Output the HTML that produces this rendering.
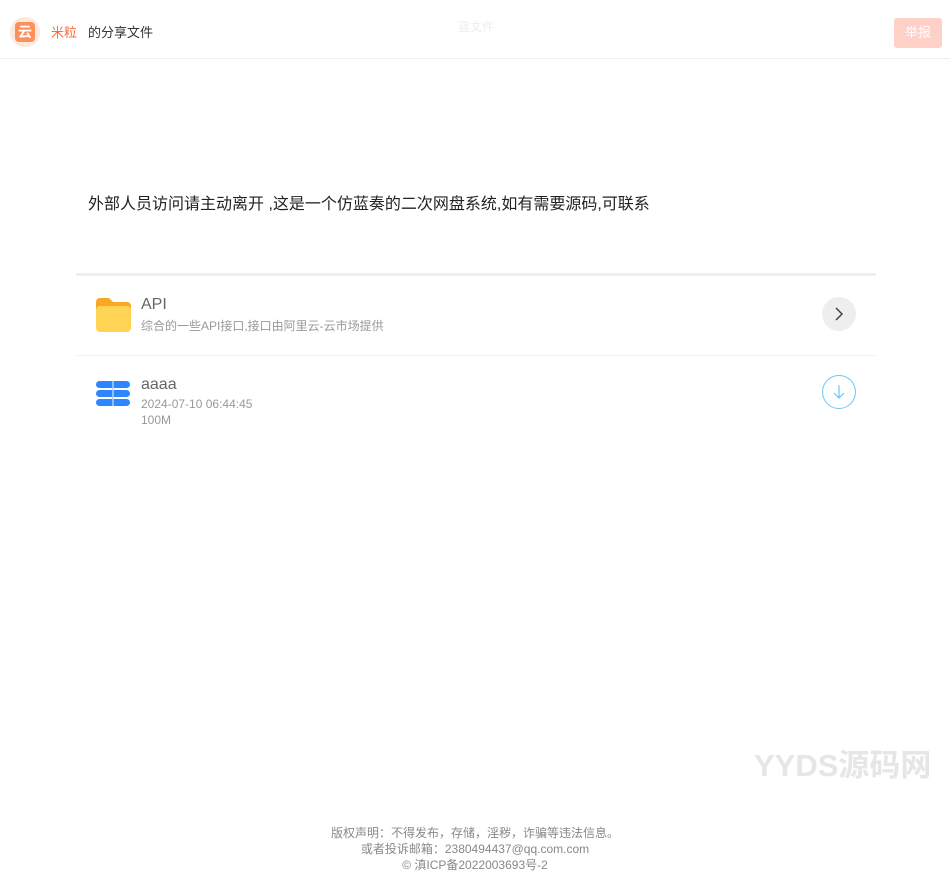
<!DOCTYPE html>
<html><head><meta charset="utf-8"><style>
*{margin:0;padding:0;box-sizing:border-box}
body{width:950px;height:891px;background:#fff;font-family:"Liberation Sans","Noto Sans CJK SC",sans-serif;position:relative;overflow:hidden}
.hdr{position:absolute;left:0;top:0;width:950px;height:59px;border-bottom:1px solid #eee}
.logo{position:absolute;left:10px;top:17px;width:30px;height:30px;border-radius:50%;background:#fbe9dd}
.logo div{position:absolute;left:5px;top:5px;width:20px;height:20px;border-radius:4px;background:#fd8f5a;color:#fff;font-size:14px;line-height:20px;text-align:center;font-weight:bold}
.t{position:absolute;font-size:13px;line-height:16px}
.rep{position:absolute;left:894px;top:18px;width:48px;height:30px;background:#ffd0c6;border-radius:3px;color:#fff;font-size:13px;line-height:30px;text-align:center}
.ghost{position:absolute;left:458px;top:18px;font-size:12px;color:#eee}
.msg{position:absolute;left:88px;top:195px;font-size:16px;line-height:20px;color:#222}
.bar{position:absolute;left:76px;top:273px;width:800px;height:3px;background:#eee}
.row{position:absolute;left:76px;width:800px}
.name{position:absolute;left:65px;font-size:16px;color:#666}
.sub{position:absolute;left:65px;font-size:12px;color:#999}
.foot{position:absolute;left:0;width:950px;text-align:center;font-size:12px;color:#888}
</style></head><body>
<div class="hdr">
<div class="logo"><div>云</div></div>
<div class="t" style="left:51px;top:25px;color:#fd6b37">米粒</div>
<div class="t" style="left:88px;top:25px;color:#333">的分享文件</div>
<div class="ghost">蓝文件</div>
<div class="rep">举报</div>
</div>
<div class="msg">外部人员访问请主动离开 ,这是一个仿蓝奏的二次网盘系统,如有需要源码,可联系</div>
<div class="bar"></div>
<div class="row" style="top:276px;height:80px;border-bottom:1px solid #f2f2f2">
<svg style="position:absolute;left:20px;top:22px" width="35" height="34"><path d="M0 4a4 4 0 0 1 4-4h9l4 4h14a4 4 0 0 1 4 4v4H0z" fill="#f8a825"/><rect x="0" y="8" width="35" height="26" rx="4" fill="#ffd454"/></svg>
<div class="name" style="top:20px">API</div>
<div class="sub" style="top:41px">综合的一些API接口,接口由阿里云-云市场提供</div>
<div style="position:absolute;left:746px;top:21px;width:34px;height:34px;border-radius:50%;background:#eee"><svg width="34" height="34"><path d="M14 11l6 6-6 6" fill="none" stroke="#444" stroke-width="1.5"/></svg></div>
</div>
<div class="row" style="top:356px;height:80px">
<svg style="position:absolute;left:20px;top:25px" width="34" height="26"><g fill="#2e86ff"><rect x="0" y="0" width="34" height="7" rx="3.5"/><rect x="0" y="9" width="34" height="7" rx="3.5"/><rect x="0" y="18" width="34" height="7" rx="3.5"/></g><path d="M17 0v25" stroke="#b3d1ff" stroke-width="1.5"/></svg>
<div class="name" style="top:20px">aaaa</div>
<div class="sub" style="top:41px">2024-07-10 06:44:45</div>
<div class="sub" style="top:57px">100M</div>
<div style="position:absolute;left:746px;top:19px;width:34px;height:34px;border-radius:50%;border:1px solid #6cc5ff"><svg width="32" height="32"><path d="M16 9v13M11 17l5 5 5-5" fill="none" stroke="#6cc5ff" stroke-width="1.2"/></svg></div>
</div>
<div style="position:absolute;left:754px;top:740px;font-size:31px;font-weight:bold;color:#e6e6e6">YYDS源码网</div>
<div class="foot" style="top:824px">版权声明：不得发布，存储，淫秽，诈骗等违法信息。</div>
<div class="foot" style="top:840px">或者投诉邮箱：2380494437@qq.com.com</div>
<div class="foot" style="top:856px">© 滇ICP备2022003693号-2</div>
</body></html>
